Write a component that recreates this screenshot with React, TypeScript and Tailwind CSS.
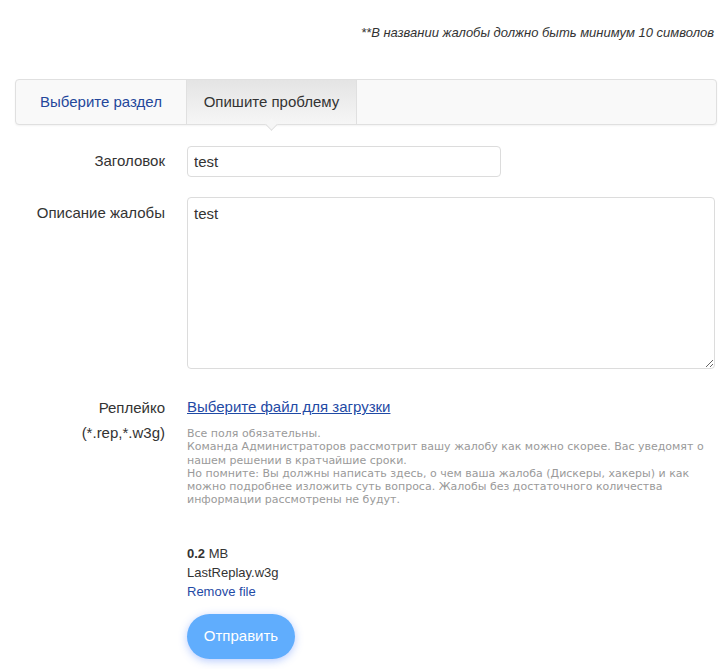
import { useState } from "react"

export default function App() {
  const [title, setTitle] = useState("test")
  const [body, setBody] = useState("test")

  return (
    <div className="min-h-screen bg-white font-['Liberation_Sans',Arial,sans-serif] text-[#333]">
      <div className="pl-[15px] pr-[4px] pt-[24px]">
        {/* note */}
        <p className="text-right pr-[3px] text-[13px] leading-[17px] italic text-[#333]">
          **В названии жалобы должно быть минимум 10 символов
        </p>

        {/* tabs */}
        <div className="mt-[38px] flex h-[46px] rounded-[4px] border border-[#e0e0e0] bg-[#f9f9f9] shadow-[0_1px_2px_rgba(0,0,0,0.05)]">
          <button className="w-[170px] text-[15px] text-[#24479b] rounded-l-[4px]">Выберите раздел</button>
          <div className="relative w-[171px] border-x border-[#e0e0e0] bg-gradient-to-b from-[#e4e4e4] to-[#f6f6f6] flex items-center justify-center text-[15px] text-[#333]">
            Опишите проблему
            <span className="absolute left-1/2 -bottom-[5px] -ml-[5px] h-[9px] w-[9px] rotate-45 border-r border-b border-[#e0e0e0] bg-[#f6f6f6]"></span>
          </div>
        </div>

        {/* form */}
        <div className="mt-[21px] flex flex-col">
          <div className="flex gap-[22px]">
            <label className="w-[150px] shrink-0 pt-[5px] text-right text-[15px] leading-[20px]">Заголовок</label>
            <input
              value={title}
              onChange={(e) => setTitle(e.target.value)}
              className="h-[31px] w-[314px] rounded-[4px] border border-[#dcdcdc] px-[6px] text-[15px] text-[#333] outline-none"
            />
          </div>

          <div className="mt-[20px] flex gap-[22px]">
            <label className="w-[150px] shrink-0 pt-[6px] text-right text-[15px] leading-[20px]">Описание жалобы</label>
            <textarea
              value={body}
              onChange={(e) => setBody(e.target.value)}
              className="h-[172px] w-[528px] rounded-[4px] border border-[#dcdcdc] px-[6px] py-[6px] text-[15px] leading-[20px] text-[#333] outline-none"
            />
          </div>

          <div className="mt-[26px] flex gap-[22px]">
            <label className="w-[150px] shrink-0 text-right text-[15px] leading-[25px]">
              Реплейко
              <br />
              (*.rep,*.w3g)
            </label>
            <div className="w-[528px]">
              <a href="#" className="block text-[15px] leading-[24px] text-[#1f4aa5] underline">
                Выберите файл для загрузки
              </a>
              <div className="mt-[8px] font-['DejaVu_Sans',Verdana,sans-serif] text-[11px] leading-[13.3px] text-[#9a9a9a]">
                Все поля обязательны.
                <br />
                Команда Администраторов рассмотрит вашу жалобу как можно скорее. Вас уведомят о нашем решении в кратчайшие сроки.
                <br />
                Но помните: Вы должны написать здесь, о чем ваша жалоба (Дискеры, хакеры) и как можно подробнее изложить суть вопроса. Жалобы без достаточного количества информации рассмотрены не будут.
              </div>

              <div className="mt-[37px] text-[13px] leading-[19px]">
                <div>
                  <b>0.2</b> MB
                </div>
                <div>LastReplay.w3g</div>
                <a href="#" className="block text-[#1f4aa5]">Remove file</a>
              </div>

              <button className="mt-[13px] h-[45px] w-[108px] rounded-full bg-[#60adfd] text-[15px] text-white shadow-[0_2px_8px_rgba(96,140,253,0.45)]">
                Отправить
              </button>
            </div>
          </div>
        </div>
      </div>
    </div>
  )
}
